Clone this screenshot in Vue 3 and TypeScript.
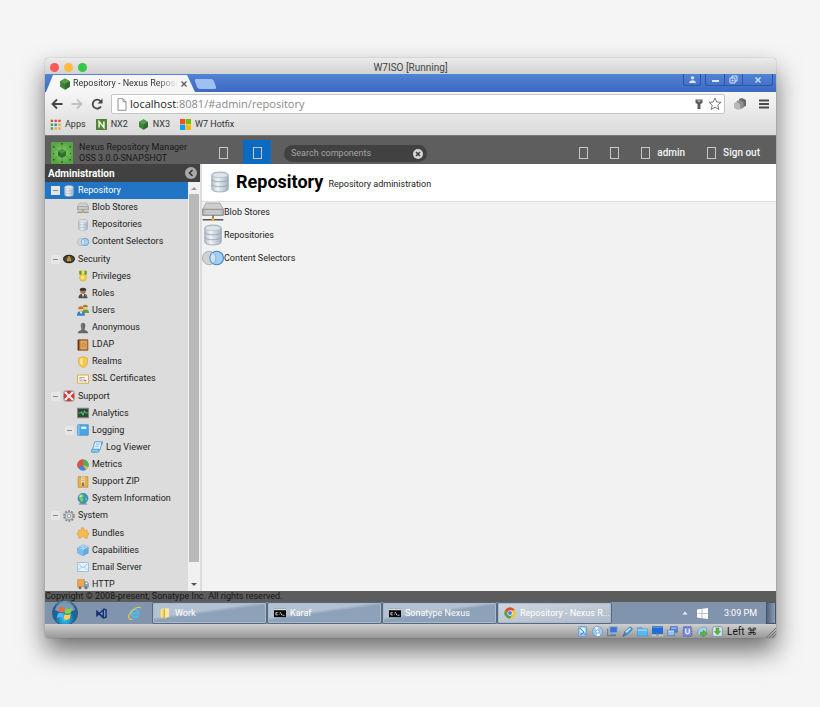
<script setup lang="ts">
import { ref } from 'vue'

interface TreeNode {
  label: string
  icon: string
  depth: number
  parent?: boolean
}

const nodes: TreeNode[] = [
  { label: 'Repository', icon: 'database', depth: 0, parent: true },
  { label: 'Blob Stores', icon: 'drive', depth: 1 },
  { label: 'Repositories', icon: 'database', depth: 1 },
  { label: 'Content Selectors', icon: 'selectors', depth: 1 },
  { label: 'Security', icon: 'security', depth: 0, parent: true },
  { label: 'Privileges', icon: 'medal', depth: 1 },
  { label: 'Roles', icon: 'officer', depth: 1 },
  { label: 'Users', icon: 'users', depth: 1 },
  { label: 'Anonymous', icon: 'anonymous', depth: 1 },
  { label: 'LDAP', icon: 'book', depth: 1 },
  { label: 'Realms', icon: 'shield', depth: 1 },
  { label: 'SSL Certificates', icon: 'certificate', depth: 1 },
  { label: 'Support', icon: 'lifebuoy', depth: 0, parent: true },
  { label: 'Analytics', icon: 'analytics', depth: 1 },
  { label: 'Logging', icon: 'notebook', depth: 1, parent: true },
  { label: 'Log Viewer', icon: 'scroll', depth: 2 },
  { label: 'Metrics', icon: 'pie', depth: 1 },
  { label: 'Support ZIP', icon: 'zip', depth: 1 },
  { label: 'System Information', icon: 'globe', depth: 1 },
  { label: 'System', icon: 'gear', depth: 0, parent: true },
  { label: 'Bundles', icon: 'puzzle', depth: 1 },
  { label: 'Capabilities', icon: 'brick', depth: 1 },
  { label: 'Email Server', icon: 'mail', depth: 1 },
  { label: 'HTTP', icon: 'truck', depth: 1 },
]

const features = [
  { label: 'Blob Stores', icon: 'drive' },
  { label: 'Repositories', icon: 'database' },
  { label: 'Content Selectors', icon: 'selectors' },
]

const bookmarks = [
  { label: 'Apps', icon: 'apps' },
  { label: 'NX2', icon: 'nx2' },
  { label: 'NX3', icon: 'hexagon' },
  { label: 'W7 Hotfix', icon: 'microsoft' },
]

const tasks = [
  { label: 'Work', icon: 'folder' },
  { label: 'Karaf', icon: 'console' },
  { label: 'Sonatype Nexus', icon: 'console' },
  { label: 'Repository - Nexus R...', icon: 'chrome' },
]

const devices = ['harddisk', 'disc', 'network', 'usb', 'shared', 'display', 'windows', 'cpu', 'mouse', 'keyboard']

const selected = ref('Repository')
const active = ref('Repository - Nexus R...')
const address = ref('/#admin/repository')
const query = ref('')
</script>

<template>
  <svg class="sprite" aria-hidden="true">
    <defs>
      <linearGradient id="steel" x1="0" x2="1">
        <stop offset="0" stop-color="#b4c0cb" /><stop offset=".35" stop-color="#eef3f7" /><stop offset="1" stop-color="#a5b3bf" />
      </linearGradient>
      <radialGradient id="orb" cx=".5" cy=".75" r=".75">
        <stop offset="0" stop-color="#39c9f4" /><stop offset=".5" stop-color="#1467a0" /><stop offset=".85" stop-color="#2f5d84" /><stop offset="1" stop-color="#a9c4d6" />
      </radialGradient>
      <radialGradient id="leaf">
        <stop offset="0" stop-color="#8ed068" /><stop offset="1" stop-color="#55a543" />
      </radialGradient>
    </defs>
    <symbol id="database" viewBox="0 0 16 16">
      <path d="M2 3c0-3 12-3 12 0v10c0 3-12 3-12 0z" fill="url(#steel)" stroke="#9aa7b2" stroke-width=".6" />
      <ellipse cx="8" cy="3" rx="5.600" ry="1.800" fill="#dfe7ed" stroke="#a3afb9" stroke-width=".4" />
      <path d="M2 6.200c1 2.200 11 2.200 12 0M2 9.800c1 2.200 11 2.200 12 0" fill="none" stroke="#93a1ad" stroke-width=".6" />
    </symbol>
    <symbol id="drive" viewBox="0 0 16 16">
      <path d="M3 1.500h10l2.500 4.500v4H.5V6z" fill="#cfcfcf" stroke="#9b9b9b" stroke-width=".6" />
      <path d="M.5 6h15v4.500H.5z" fill="#b5b5b5" stroke="#8d8d8d" stroke-width=".6" />
      <path d="M2 7.400h12M2 8.900h12" stroke="#e4e4e4" stroke-width=".6" />
      <path d="M8 10.500V13M.5 13.600h15" stroke="#555" stroke-width="1" />
      <path d="M6.900 12.400h2.200v2.200H6.900z" fill="#eda72f" />
    </symbol>
    <symbol id="selectors" viewBox="0 0 16 16">
      <circle cx="5.200" cy="8" r="4.900" fill="#cfd3d6" stroke="#a5aaaf" stroke-width=".6" />
      <circle cx="10.700" cy="8" r="4.900" fill="#a4cff2" stroke="#3c86ca" stroke-width=".8" />
      <path d="M8 4a4.900 4.900 0 0 1 0 8 4.900 4.900 0 0 1 0-8z" fill="#d0e5f7" stroke="#5c96c8" stroke-width=".4" />
    </symbol>
    <symbol id="security" viewBox="0 0 16 16">
      <ellipse cx="8" cy="8" rx="8" ry="5.600" fill="#292724" />
      <path d="M1 8c3-4 5-4 5-4v8S4 12 1 8zM15 8c-3-4-5-4-5-4v8s2 0 5-4z" fill="#4d473d" />
      <path d="M6.600 4.300h2.800L10.600 11H5.400z" fill="#efc03c" /><path d="M8 4v7" stroke="#6d5213" />
    </symbol>
    <symbol id="medal" viewBox="0 0 16 16">
      <path d="M3 1h10v5l-5 2-5-2z" fill="#5d9d2f" /><path d="M6 1h4v6H6z" fill="#f4df58" />
      <circle cx="8" cy="10.300" r="4.700" fill="#f4cf4d" stroke="#d9a73a" stroke-width=".7" /><circle cx="7.400" cy="9.700" r="2" fill="#fff0a1" />
    </symbol>
    <symbol id="officer" viewBox="0 0 16 16">
      <path d="M2 15c0-5 3-6 6-6s6 1 6 6z" fill="#4e4b47" /><circle cx="8" cy="5.500" r="3.600" fill="#a9764c" />
      <path d="M3.500 4c0-4 9-4 9 0l-1 1h-7z" fill="#38342f" /><path d="M6.500 9.400 8 14l1.500-4.600z" fill="#eee" /><path d="m11 11 2 2" stroke="#dfb438" />
    </symbol>
    <symbol id="users" viewBox="0 0 16 16">
      <path d="M6 12c0-5 2-5 4.500-5S16 7 16 12z" fill="#64a141" /><circle cx="11" cy="4.500" r="3.300" fill="#efc28d" />
      <path d="M7.500 4c0-4 7-4 7 0z" fill="#a9762c" />
      <path d="M0 15.500c0-6 3-6 5.500-6s5 0 5 6z" fill="#3481c8" /><circle cx="5" cy="7" r="3.500" fill="#f3c895" />
      <path d="M1.500 6.500c0-4.500 7-4.500 7 0z" fill="#b8782b" /><path d="m4 10.500 1.500 3 1.500-3z" fill="#fff" />
    </symbol>
    <symbol id="anonymous" viewBox="0 0 16 16">
      <path d="M1 15c0-3 2-3.500 5-4.500L5 5.500c-1-6 7-6 6 0l-1 5c3 1 5 1.500 5 4.500z" fill="#686868" /><path d="M7 2.500c-1 2 0 6 0 7" stroke="#999" fill="none" />
    </symbol>
    <symbol id="book" viewBox="0 0 16 16">
      <path d="M1.500 1h13v14h-13z" fill="#bd7431" stroke="#8a5220" /><path d="M4.500 2.500h8.500v11H4.500z" fill="#e0a860" /><path d="M2 1v14" stroke="#643510" stroke-width="2" />
      <circle cx="8.700" cy="8" r="2.300" fill="none" stroke="#b97a35" />
    </symbol>
    <symbol id="shield" viewBox="0 0 16 16">
      <path d="M8 .7 14 3v5c0 4-3 6.500-6 7.500C5 14.500 2 12 2 8V3z" fill="#f7c84b" stroke="#dda12d" stroke-width=".8" /><path d="M7.500 2.500 4 4v4c0 2 1 3 3.500 4z" fill="#ffe898" />
    </symbol>
    <symbol id="certificate" viewBox="0 0 16 16">
      <path d="M.7 2.700h14.600v11H.7z" fill="#fff5dc" stroke="#dca850" stroke-width="1.300" /><path d="M3 6h7M3 8h4M3 10.500h6" stroke="#8594a0" /><path d="m8 8 5 2-2 2z" fill="#5d8fb7" />
    </symbol>
    <symbol id="lifebuoy" viewBox="0 0 16 16">
      <rect x=".3" y=".3" width="15.400" height="15.400" rx="4" fill="#9aa3a9" /><circle cx="8" cy="8" r="5" fill="none" stroke="#df3732" stroke-width="4.200" />
      <path d="m2.800 2.800 3.200 3.200M13.200 2.800 10 6M2.800 13.200 6 10M13.200 13.200 10 10" stroke="#fff" stroke-width="2.600" /><circle cx="8" cy="8" r="2.800" fill="#e4eaee" />
    </symbol>
    <symbol id="analytics" viewBox="0 0 16 16">
      <path d="M.7 1.700h14.600v12.600H.7z" fill="#2b4938" stroke="#858585" stroke-width="1.400" /><path d="M2 8h3l1-2 2 5 2-6 1.500 3H14" fill="none" stroke="#59df69" stroke-width="1.200" />
    </symbol>
    <symbol id="notebook" viewBox="0 0 16 16">
      <path d="M1 1h14v14H1z" fill="#4aa5e5" stroke="#3b8bcb" /><path d="M2.500 1v14" stroke="#c0e7ff" /><path d="M5.500 3.500h7v3h-7z" fill="#e7f7ff" />
    </symbol>
    <symbol id="scroll" viewBox="0 0 16 16">
      <path d="M5 1h10l-3 11H2z" fill="#e1f4ff" stroke="#3789bd" /><path d="M2 11h9c-1 2 0 4-2 4H1c-2-2 0-4 1-4zM15 1v3h-2" fill="#8dccf1" stroke="#3789bd" /><path d="M6.500 4h5M5.500 7h5" stroke="#65a8d0" />
    </symbol>
    <symbol id="pie" viewBox="0 0 16 16">
      <circle cx="8" cy="8" r="7.500" fill="#3f86d8" /><path d="M8 8V.5A7.500 7.500 0 0 0 1.500 12z" fill="#e24e43" /><path d="M8 8V.5A7.500 7.500 0 0 1 15 10.500z" fill="#58ad48" /><path d="M8 8l7 2.500A7.500 7.500 0 0 1 12 14.300z" fill="#f1bd42" />
    </symbol>
    <symbol id="zip" viewBox="0 0 16 16">
      <path d="M1.500 1h13v14h-13z" fill="#e5b04e" stroke="#bf8c35" /><path d="M6 1h4v11H6z" fill="#fff1c4" /><path d="M8 2v11" stroke="#655035" stroke-dasharray="2 1" /><path d="M6.500 9h3v4h-3z" fill="#807663" />
    </symbol>
    <symbol id="globe" viewBox="0 0 16 16">
      <path d="M3.500 13h9l1.500 2.500H2z" fill="#939c9f" /><circle cx="8" cy="7" r="6.700" fill="#2e91dc" stroke="#27638e" stroke-width=".6" />
      <path d="M4 2c4-1 6 1 5 3L6 6l3 2-2 5-3-4-2-4zM11 5l3 3-2 3z" fill="#7ed149" /><circle cx="5" cy="4" r="1.500" fill="#d7f4ff" opacity=".7" />
    </symbol>
    <symbol id="gear" viewBox="0 0 16 16">
      <circle cx="8" cy="8" r="6.600" fill="none" stroke="#858a8e" stroke-width="2.400" stroke-dasharray="2.600 1.550" /><circle cx="8" cy="8" r="5.300" fill="#d3d5d7" stroke="#858a8e" /><circle cx="8" cy="8" r="2.300" fill="#eee" stroke="#858a8e" />
    </symbol>
    <symbol id="puzzle" viewBox="0 0 16 16">
      <path d="M6 4.500C4-.5 10.500-.5 9 4.500l4.500-.5v3.500c3.500-1 3.500 4.500 0 3.500L14 15l-4-.5c-.5-3-3.500-3-4 0l-4 .5.500-4c-3.500.5-3.500-4.500 0-3.500L2 4z" fill="#f6ba4e" stroke="#dd9a38" stroke-width=".8" />
    </symbol>
    <symbol id="brick" viewBox="0 0 16 16">
      <path d="m1 5 7-4 7 3v8l-7 3.500L1 12z" fill="#64aee6" stroke="#4486bb" stroke-width=".6" /><path d="m1 5 7 3 7-4-7-3z" fill="#afdcfb" /><path d="M8 8v7.500L1 12V5z" fill="#7dbcf0" />
      <ellipse cx="5" cy="4.500" rx="2" ry="1" fill="#80baf0" /><ellipse cx="10" cy="4" rx="2" ry="1" fill="#80baf0" />
    </symbol>
    <symbol id="mail" viewBox="0 0 16 16">
      <path d="M.7 2h14.600v12H.7z" fill="#e3f4ff" stroke="#8bbbd8" stroke-width="1.100" /><path d="m2 4 6 5 6-5M2 12l4-4M14 12l-4-4" fill="none" stroke="#8ab8d6" />
    </symbol>
    <symbol id="truck" viewBox="0 0 16 16">
      <path d="M.5 2h9.500v10H.5z" fill="#eba452" stroke="#c8893f" stroke-width=".7" /><path d="M10 5h3.500l2 3v4H10z" fill="#84a6bf" stroke="#65859d" stroke-width=".7" /><path d="M11.500 6h1.600l1.300 2h-2.900z" fill="#e3f6ff" />
      <circle cx="4" cy="13" r="2" fill="#6d7275" /><circle cx="12" cy="13" r="2" fill="#6d7275" />
    </symbol>
    <symbol id="hexagon" viewBox="0 0 16 16">
      <path d="m8 .5 6.500 3.700v7.600L8 15.500l-6.500-3.700V4.200z" fill="#3e853a" /><path d="m8 .5 6.500 3.700L8 8 1.500 4.200z" fill="#579b4b" /><path d="m14.500 4.200-6.500 3.800v7.500l6.500-3.700z" fill="#2f6d2f" />
    </symbol>
    <symbol id="apps" viewBox="0 0 16 16">
      <path d="M1 1h3.500v3.500H1zM6.500 1H10v3.500H6.500zM12 1h3.500v3.500H12z" fill="#d94d3d" /><path d="M1 6.500h3.500V10H1z" fill="#45a45a" /><path d="M6.500 6.500H10V10H6.500z" fill="#3a7bd6" /><path d="M12 6.500h3.500V10H12zM6.500 12H10v3.500H6.500zM12 12h3.500v3.500H12z" fill="#e3ae36" /><path d="M1 12h3.500v3.500H1z" fill="#45a45a" />
    </symbol>
    <symbol id="nx2" viewBox="0 0 16 16">
      <path d="M.5.500h15v15H.5z" fill="#55892d" stroke="#37671d" /><path d="M4.500 12.500v-9l7 9v-9" fill="none" stroke="#fff" stroke-width="2" />
    </symbol>
    <symbol id="microsoft" viewBox="0 0 16 16">
      <path d="M0 0h7.600v7.600H0z" fill="#f25022" /><path d="M8.400 0H16v7.600H8.400z" fill="#7fba00" /><path d="M0 8.400h7.600V16H0z" fill="#00a4ef" /><path d="M8.400 8.400H16V16H8.400z" fill="#ffb900" />
    </symbol>
    <symbol id="folder" viewBox="0 0 16 16">
      <path d="M2 2.500 7 1v14l-5-1z" fill="#f5df87" /><path d="M6 3h4v12H6z" fill="#d9af41" /><path d="M8 1.500h5.500v11L8 15z" fill="#fae9a4" />
    </symbol>
    <symbol id="console" viewBox="0 0 16 16">
      <path d="M0 2.500h16v11H0z" fill="#090909" /><path d="M0 2.500h16v1.800H0z" fill="#d7dade" /><path d="M5 7.500H2.500v3H5M7 7.500v.8M7 10v.8M8.500 7l2 4M11.500 11H14" fill="none" stroke="#fff" />
    </symbol>
    <symbol id="chrome" viewBox="0 0 16 16">
      <circle cx="8" cy="8" r="7.500" fill="#f4c431" /><path d="M1.500 4.200A7.500 7.500 0 0 1 14.500 4.300H8L5 10z" fill="#de4c3c" /><path d="M1.500 4.200A7.500 7.500 0 0 0 8 15.500L11 10H5z" fill="#4ba355" /><circle cx="8" cy="8" r="3.500" fill="#fff" /><circle cx="8" cy="8" r="2.700" fill="#4a83df" />
    </symbol>
    <symbol id="harddisk" viewBox="0 0 16 16">
      <rect x="2" y=".7" width="12" height="14.600" rx="1.500" fill="#9cc8ec" stroke="#5b93c9" /><circle cx="8" cy="6" r="4" fill="#e4f5ff" /><path d="m4 3 6 6-5 4M11 12h2" fill="none" stroke="#1960c5" stroke-width="1.400" />
    </symbol>
    <symbol id="disc" viewBox="0 0 16 16">
      <circle cx="8" cy="8" r="7.300" fill="#a2cdef" stroke="#5790c5" /><path d="M8 8 4 2l5-1zM8 8l4 6-5 1z" fill="#f4fcff" /><circle cx="8" cy="8" r="2.400" fill="#f8ffff" stroke="#5591c2" />
    </symbol>
    <symbol id="network" viewBox="0 0 16 16">
      <path d="M4 1h11v9H4z" fill="#3775d8" stroke="#9db6d0" stroke-width="1.400" /><path d="M1 4v10h11v-2" fill="none" stroke="#567ba3" stroke-width="1.500" /><path d="M7 10v3h5" stroke="#5b7796" fill="none" />
    </symbol>
    <symbol id="usb" viewBox="0 0 16 16">
      <path d="m2 15 2-7 7-6c3-1 5 2 3 4l-6 6z" fill="#53a3e1" stroke="#2870ad" /><path d="m5 8 6-5 2 1-7 6z" fill="#c6eaff" /><path d="m1 15 5-5" stroke="#596c7b" stroke-width="1.500" />
    </symbol>
    <symbol id="shared" viewBox="0 0 16 16">
      <path d="M.5 2.500H7l1 2h7.500v10H.5z" fill="#5db6ee" stroke="#3c94d1" /><path d="M1 6h14" stroke="#bde6ff" stroke-width="1.500" />
    </symbol>
    <symbol id="display" viewBox="0 0 16 16">
      <path d="M.7 1h14.600v10H.7z" fill="#1e6be2" stroke="#145fae" /><path d="M1 2h14" stroke="#76aaf4" /><path d="M0 12.500h16V15H0z" fill="#b8c5cd" /><path d="M6 11h4v3H6z" fill="#89969d" />
    </symbol>
    <symbol id="windows" viewBox="0 0 16 16">
      <path d="M5 1h10v8H5z" fill="#5488da" stroke="#315fb8" /><path d="M1 6h10v8H1z" fill="#98bdf1" stroke="#4976bd" /><path d="M2 7.500h8M6 3h8" stroke="#e7f4ff" />
    </symbol>
    <symbol id="cpu" viewBox="0 0 16 16">
      <rect x="2" y="1" width="12" height="14" rx="2" fill="#7f90dc" stroke="#5465ba" stroke-dasharray="1.500 1" stroke-width="2" /><path d="M5.500 4v5c0 3 5 3 5 0V4" fill="none" stroke="#fff" stroke-width="1.600" />
    </symbol>
    <symbol id="mouse" viewBox="0 0 16 16">
      <path d="M1 11C1 4 8 0 13 2c4 5-4 12-9 12z" fill="#a4d5f4" stroke="#4482ac" stroke-width=".8" /><path d="m9 6 6 5-6 5v-3H5V9h4z" fill="#56bc36" stroke="#2c8428" stroke-width=".7" />
    </symbol>
    <symbol id="keyboard" viewBox="0 0 16 16">
      <rect x="1" y="1" width="14" height="14" rx="2" fill="#d5e5ec" stroke="#67889f" /><path d="M8 13 3.500 8H6V3h4v5h2.500z" fill="#5db73a" stroke="#37872a" stroke-width=".7" />
    </symbol>
    <symbol id="flag" viewBox="0 0 16 16">
      <path d="M2 3c2-1.500 4-1.500 6-.3L7 7.500c-2-1.300-4-1.300-6 0z" fill="#f06b34" /><path d="M8.800 3.200c2 1.300 4.200 1 6.200-.2l-1 4.700c-2 1.500-4.500 1.500-6.200.3z" fill="#92cb41" /><path d="M.8 8.700c2-1.500 4-1.300 6 0l-1 4.600c-2-1.300-4-1.300-6 0z" fill="#5ab4ed" /><path d="M7.600 9.200c2 1.300 4.300 1 6.200-.3l-1 4.600c-2 1.500-4.500 1.500-6.200.3z" fill="#fdd341" />
    </symbol>
    <symbol id="person" viewBox="0 0 16 16">
      <circle cx="8" cy="5" r="3" /><path d="M2 14c0-6 12-6 12 0z" />
    </symbol>
    <symbol id="close" viewBox="0 0 16 16"><path d="m3 3 10 10M13 3 3 13" fill="none" stroke="currentColor" stroke-width="2.500" /></symbol>
  </svg>

  <div class="desktop">
    <div class="window">
      <header class="titlebar">
        <div class="lights">
          <button class="light red" aria-label="Close window"></button>
          <button class="light amber" aria-label="Minimise window"></button>
          <button class="light green" aria-label="Zoom window"></button>
        </div>
        <span>W7ISO [Running]</span>
      </header>

      <div class="tabstrip">
        <div class="tab">
          <svg class="i12"><use href="#hexagon" /></svg>
          <span class="tab-title">Repository - Nexus Reposi</span>
          <button class="tab-close" aria-label="Close tab"><svg class="i8"><use href="#close" /></svg></button>
        </div>
        <button class="new-tab" aria-label="New tab"></button>
        <div class="controls">
          <button class="profile" aria-label="Profile"><svg class="i9"><use href="#person" /></svg></button>
          <div class="control-group">
            <button aria-label="Minimise"><svg class="i9" viewBox="0 0 9 9"><path d="M1 5h7v2H1z" /></svg></button>
            <button aria-label="Restore"><svg class="i9" viewBox="0 0 9 9"><path d="M3 3V1h5v5H6M1 3h5v5H1zM3 5h1v1H3z" fill="none" stroke="#dbe7fa" /></svg></button>
            <button class="wide" aria-label="Close"><svg class="i8"><use href="#close" /></svg></button>
          </div>
        </div>
      </div>

      <div class="toolbar">
        <button class="tool" aria-label="Back"><svg class="i12" viewBox="0 0 12 12"><path d="M6 1.500 1.500 6 6 10.500M2 6h9.500" fill="none" stroke="#454545" stroke-width="1.800" /></svg></button>
        <button class="tool" aria-label="Forward"><svg class="i12" viewBox="0 0 12 12"><path d="M6 1.500 10.500 6 6 10.500M10 6H.5" fill="none" stroke="#c2c2c2" stroke-width="1.800" /></svg></button>
        <button class="tool" aria-label="Reload"><svg class="i12" viewBox="0 0 12 12"><path d="M10 8.500A4.500 4.500 0 1 1 9.500 3" fill="none" stroke="#454545" stroke-width="1.800" /><path d="M11.500.500v5h-5z" fill="#454545" /></svg></button>
        <div class="address">
          <svg class="page-icon" viewBox="0 0 10 13"><path d="M1 .7h5l3 3v8.600H1zM6 .7v3h3" fill="#fff" stroke="#8f8f8f" /></svg>
          <label class="url" aria-label="Address"><span>localhost</span><span class="path">:8081</span><input v-model="address" class="path" aria-label="Address path" /></label>
          <button aria-label="Saved passwords"><svg class="i12" viewBox="0 0 12 12"><path d="M2.500 1.500h7v3.500L7.500 6v5h-3V6l-2-1z" fill="#5c5c5c" /><path d="M4.500 3h3" stroke="#ddd" /></svg></button>
          <button aria-label="Bookmark this page"><svg class="star" viewBox="0 0 14 14"><path d="m7 1 1.700 4 4.300.3-3.300 2.800 1.100 4.400L7 10.100l-3.800 2.400 1.100-4.400L1 5.300 5.300 5z" fill="#fff" stroke="#777" /></svg></button>
        </div>
        <button class="tool" aria-label="Extension"><svg class="i12" viewBox="0 0 12 12"><path d="m5 1 3-1 4 2v6L9 9 5 7z" fill="#696969" /><path d="m2.500 3 3-1 4 2v6l-3 1-4-2z" fill="#909090" /><path d="m0 5 2.500-1L6 6v5l-2 1-4-2z" fill="#b9b9b9" /></svg></button>
        <button class="tool menu" aria-label="Menu"><svg class="i10" viewBox="0 0 10 10"><path d="M0 1.500h10M0 5h10M0 8.500h10" stroke="#4b4b4b" stroke-width="2" /></svg></button>
      </div>

      <nav class="bookmarks" aria-label="Bookmarks">
        <a v-for="b in bookmarks" :key="b.label" href="#"><svg class="i11"><use :href="'#' + b.icon" /></svg>{{ b.label }}</a>
      </nav>

      <div class="app-header">
        <svg class="logo" viewBox="0 0 22 22">
          <path d="M0 0h22v22H0z" fill="url(#leaf)" /><path d="m11 7 4 2.200v4.600L11 16l-4-2.200V9.200z" fill="#2f7032" /><path d="m11 7 4 2.200-4 2.300-4-2.300z" fill="#499540" />
          <path d="m7 9-4-4m12 4 4-4M7 14l-4 4m12-4 4 4M11 7V2m0 14v5" stroke="#478a40" stroke-width=".5" />
          <path d="M2 4h1.500v1.500H2zM18.500 4H20v1.500h-1.500zM2 17h1.500v1.500H2zM18.500 17H20v1.500h-1.500zM10.300 1h1.500v1.500h-1.500zM10.300 19h1.500v1.500h-1.500zM2 11h1v1H2zM19 11h1v1h-1z" fill="#285a28" />
        </svg>
        <div class="brand">Nexus Repository Manager<br />OSS 3.0.0-SNAPSHOT</div>
        <button class="mode" aria-label="Browse"><i class="box"></i></button>
        <button class="mode on" aria-label="Administration"><i class="box"></i></button>
        <div class="search">
          <input v-model="query" type="text" placeholder="Search components" aria-label="Search components" />
          <button aria-label="Clear search" @click="query = ''"><svg class="i10" viewBox="0 0 10 10"><circle cx="5" cy="5" r="5" fill="#d8d8d8" /><path d="m3 3 4 4M7 3 3 7" stroke="#3e3e3e" stroke-width="1.500" /></svg></button>
        </div>
        <div class="session">
          <button aria-label="Refresh"><i class="box"></i></button>
          <button aria-label="Help"><i class="box"></i></button>
          <button><i class="box"></i>admin</button>
          <button><i class="box"></i>Sign out</button>
        </div>
      </div>

      <div class="body">
        <aside class="sidebar">
          <div class="side-title">
            Administration
            <button aria-label="Collapse"><svg class="i12" viewBox="0 0 12 12"><circle cx="6" cy="6" r="6" fill="#aaa" /><path d="M7.500 3 4.500 6l3 3" fill="none" stroke="#333" stroke-width="1.600" /></svg></button>
          </div>
          <div class="tree-area">
            <ul class="tree">
              <li v-for="n in nodes" :key="n.label" :class="['depth-' + n.depth, { selected: selected === n.label }]">
                <button class="node" @click="selected = n.label">
                  <span class="toggle" :class="{ shown: n.parent }"></span>
                  <svg class="i12"><use :href="'#' + n.icon" /></svg>
                  <span>{{ n.label }}</span>
                </button>
              </li>
            </ul>
            <div class="scrollbar" aria-hidden="true">
              <svg class="arrow" viewBox="0 0 12 12"><path d="m3 8 3-3 3 3z" fill="#999" /></svg>
              <div class="thumb"></div>
              <svg class="arrow tall" viewBox="0 0 12 12"><path d="m3 5 3 3 3-3z" fill="#555" /></svg>
            </div>
          </div>
        </aside>

        <main class="content">
          <div class="content-head">
            <svg class="i22"><use href="#database" /></svg>
            <h1>Repository</h1>
            <span>Repository administration</span>
          </div>
          <ul class="features">
            <li v-for="f in features" :key="f.label">
              <a href="#"><svg class="i22"><use :href="'#' + f.icon" /></svg>{{ f.label }}</a>
            </li>
          </ul>
        </main>
      </div>

      <footer class="copyright">Copyright © 2008-present, Sonatype Inc. All rights reserved.</footer>

      <div class="taskbar">
        <button class="start" aria-label="Start">
          <svg viewBox="0 0 26 26"><circle cx="13" cy="13" r="12.500" fill="url(#orb)" stroke="#35597a" /><path d="M3 10C5 0 21 0 23 10c-7 3-14 3-20 0z" fill="#d5e8f2" opacity=".45" /><use href="#flag" x="5" y="5" width="16" height="16" /></svg>
        </button>
        <button class="pinned" aria-label="Visual Studio"><svg class="i11" viewBox="0 0 12 12"><path d="M1 3.500v5l7-6.500v8z M8 1l3 1v8l-3 1-7-7" fill="none" stroke="#123173" stroke-width="1.500" /></svg></button>
        <button class="pinned" aria-label="Internet Explorer"><svg class="i14" viewBox="0 0 14 14"><path d="M3.500 7.500h7c0-5-7-5-7 0 0 4 5 5 7 2" fill="none" stroke="#4fb9ed" stroke-width="2.200" /><path d="M13 2C9-1-2 8 1.500 13c1 1 3 0 3 0" fill="none" stroke="#e7c64b" stroke-width="1.200" /></svg></button>
        <div class="tasks">
          <button v-for="t in tasks" :key="t.label" class="task" :class="{ active: active === t.label }" @click="active = t.label">
            <svg class="i12"><use :href="'#' + t.icon" /></svg><span>{{ t.label }}</span>
          </button>
        </div>
        <div class="tray">
          <svg class="i8" viewBox="0 0 8 8"><path d="m1.500 5.500 2.500-3 2.500 3z" fill="#eef2f8" /></svg>
          <svg class="i11" viewBox="0 0 11 11"><path d="m0 1.500 4.700-.7v4.400H0zM5.300.7 11 0v5.200H5.300zM0 5.800h4.700v4.400L0 9.500zM5.300 5.800H11V11l-5.700-.7z" fill="#fff" /></svg>
          <time>3:09 PM</time>
        </div>
        <button class="peek" aria-label="Show desktop"></button>
      </div>

      <div class="statusbar">
        <svg v-for="d in devices" :key="d" class="i11"><use :href="'#' + d" /></svg>
        <span class="hostkey">Left ⌘</span>
        <svg class="grip" viewBox="0 0 10 10"><path d="M0 10 10 0M3 10l7-7M6 10l4-4" stroke="#6f6f6f" /></svg>
      </div>
    </div>
  </div>
</template>

<style>
body {
  background: #f5f5f5;
}
</style>

<style scoped>
* {
  box-sizing: border-box;
}
button {
  padding: 0;
  border: 0;
  background: none;
  font: inherit;
  color: inherit;
}
button,
a,
.lights,
.tab,
.tray {
  display: flex;
  align-items: center;
}
button {
  justify-content: center;
}
a {
  color: inherit;
  text-decoration: none;
}
ul {
  margin: 0;
  padding: 0;
  list-style: none;
}
svg {
  display: block;
  flex: none;
}
.sprite {
  position: absolute;
  width: 0;
  height: 0;
}
.i8 { width: 8px; height: 8px; }
.i9 { width: 9px; height: 9px; }
.i10 { width: 10px; height: 10px; }
.i11 { width: 11px; height: 11px; }
.i12 { width: 12px; height: 12px; }
.i14 { width: 14px; height: 14px; }
.i22 { width: 22px; height: 22px; }

.desktop {
  display: flex;
  min-height: 100vh;
  padding: 58px 44px 69px 45px;
  font-family: Roboto, 'Liberation Sans', sans-serif;
  font-size: 9px;
  line-height: 11px;
  color: #222;
}
.window {
  flex: 1;
  min-width: 0;
  display: flex;
  flex-direction: column;
  border-radius: 4px;
  overflow: hidden;
  background: #dcdcdc;
  box-shadow: 0 0 1px rgba(0, 0, 0, 0.5), 0 13px 26px rgba(0, 0, 0, 0.55);
}

.titlebar {
  display: grid;
  grid-template-columns: 1fr auto 1fr;
  align-items: center;
  height: 16px;
  padding: 2px 5px 0;
  background: linear-gradient(#ebebeb, #d2d2d2);
  color: #444;
  font-size: 10px;
}
.lights {
  gap: 5px;
}
.light {
  width: 9px;
  height: 9px;
  border-radius: 50%;
}
.red { background: #fc5b57; }
.amber { background: #fdbc40; }
.green { background: #34c84a; }

.tabstrip {
  display: flex;
  height: 18px;
  background: linear-gradient(#5283d4, #3c69c4);
}
.tab {
  width: 149px;
  margin: 1px 0 0 1px;
  padding: 0 10px 0 13px;
  background: #f6f6f6;
  clip-path: polygon(0 100%, 7px 0, 141px 0, 100% 100%);
  gap: 2px;
  color: #333;
}
.tab-title {
  flex: 1;
  white-space: nowrap;
  mask-image: linear-gradient(90deg, #000 80%, transparent);
}
.tab-close {
  color: #555;
}
.new-tab {
  width: 19px;
  height: 10px;
  margin: 5px 0 0 1px;
  border-radius: 2px;
  background: #9fc0f1;
  transform: skewX(20deg);
}
.controls {
  display: flex;
  gap: 4px;
  margin: 0 3px 0 auto;
  height: 12px;
  color: #dbe7fa;
  fill: #dbe7fa;
}
.profile,
.control-group {
  border: 1px solid #2c57a8;
  border-top: 0;
  border-radius: 0 0 3px 3px;
}
.profile {
  width: 18px;
}
.control-group {
  display: flex;
}
.control-group button {
  width: 18px;
}
.control-group button + button {
  border-left: 1px solid #2c57a8;
}
.control-group .wide {
  width: 30px;
}

.toolbar {
  display: flex;
  align-items: center;
  height: 24px;
  padding: 0 6px;
  gap: 8px;
  background: linear-gradient(#f6f6f6, #e6e6e6);
}
.tool {
  width: 12px;
  height: 20px;
}
.menu {
  margin-left: 4px;
}
.address {
  flex: 1;
  display: flex;
  align-items: center;
  height: 20px;
  margin-right: 1px;
  padding: 0 2px 0 5px;
  gap: 3px;
  background: #fff;
  border: 1px solid #c4c4c4;
  border-radius: 2px;
}
.page-icon {
  width: 10px;
  height: 13px;
}
.url {
  flex: 1;
  display: flex;
  align-items: center;
  font: 11px/16px 'Open Sans', sans-serif;
  color: #222;
}
.path {
  color: #888;
}
.url input {
  flex: 1;
  min-width: 0;
  padding: 0;
  border: 0;
  outline: 0;
  background: none;
  font: inherit;
}
.star {
  width: 14px;
  height: 14px;
}

.bookmarks {
  display: flex;
  gap: 10px;
  height: 19px;
  padding: 0 5px 2px;
  background: linear-gradient(#e6e6e6, #dadada);
  color: #333;
}
.bookmarks a {
  gap: 4px;
}

.app-header {
  display: flex;
  align-items: flex-end;
  height: 29px;
  padding: 0 16px 0 6px;
  background: #5e5e5e;
  border-top: 1px solid #777;
}
.logo {
  width: 22px;
  height: 22px;
}
.brand {
  width: 130px;
  margin-left: 6px;
  color: #181818;
  white-space: nowrap;
}
.box {
  width: 9px;
  height: 12px;
  border: 1px solid #c8c8c8;
}
.mode {
  width: 28px;
  height: 24px;
  padding-top: 2px;
}
.mode:nth-of-type(1) {
  margin-right: 6px;
}
.on {
  background: #0a6bc0;
}
.search {
  display: flex;
  align-items: center;
  width: 143px;
  height: 17px;
  margin: 0 0 2px 13px;
  padding: 0 4px 0 7px;
  border-radius: 9px;
  background: #414141;
}
.search input {
  flex: 1;
  min-width: 0;
  padding: 0;
  border: 0;
  outline: 0;
  background: none;
  font: inherit;
  color: #eee;
}
.search input::placeholder {
  color: #a5a5a5;
  opacity: 1;
}
.session {
  display: flex;
  align-items: center;
  height: 24px;
  padding-top: 1px;
  margin-left: auto;
  gap: 22px;
  color: #f4f4f4;
  font-size: 10px;
  font-weight: 500;
}
.session button {
  gap: 7px;
}

.body {
  flex: 1;
  min-height: 0;
  display: flex;
}
.sidebar {
  flex: none;
  display: flex;
  flex-direction: column;
  width: 157px;
  border-right: 2px solid #dcdcdc;
  background: #dcdcdc;
}
.side-title {
  display: flex;
  align-items: center;
  justify-content: space-between;
  height: 18px;
  padding: 0 3px;
  background: #414141;
  color: #fff;
  font-size: 10px;
  font-weight: 700;
}
.tree-area {
  flex: 1;
  min-height: 0;
  display: flex;
  overflow: hidden;
}
.tree {
  flex: 1;
  display: flex;
  flex-direction: column;
  margin-bottom: -2px;
}
.tree li {
  flex: 1;
  display: flex;
  padding-left: 6px;
}
.tree .depth-1 { padding-left: 20px; }
.tree .depth-2 { padding-left: 34px; }
.tree .selected {
  background: #2175c4;
  color: #fff;
}
.node {
  flex: 1;
  justify-content: flex-start;
  gap: 3px;
  white-space: nowrap;
}
.toggle {
  width: 9px;
  height: 9px;
}
.shown {
  display: flex;
  align-items: center;
  justify-content: center;
  background: #e6e6e6;
}
.shown::before {
  content: '';
  width: 5px;
  height: 1px;
  background: #888;
}
.scrollbar {
  display: flex;
  flex-direction: column;
  width: 12px;
  background: #f1f1f1;
}
.arrow {
  width: 12px;
  height: 12px;
}
.tall {
  height: 14px;
  margin-top: 15px;
}
.thumb {
  flex: 1;
  margin: 0 1px;
  background: #b9b9b9;
}

.content {
  flex: 1;
  min-width: 0;
  background: #f2f2f2;
}
.content-head {
  display: flex;
  align-items: center;
  height: 38px;
  padding: 0 7px 2px;
  background: #fff;
  border-bottom: 1px solid #dcdcdc;
}
h1 {
  margin: 0 5px;
  font-size: 18px;
  line-height: 20px;
  font-weight: 700;
  color: #000;
}
.content-head span {
  padding-top: 6px;
}
.features li {
  height: 23px;
}
.features a {
  height: 20px;
}

.copyright {
  height: 11px;
  background: #5c5c5c;
  color: #151515;
}
.taskbar {
  display: flex;
  height: 22px;
  background: #8194ad;
  color: #fff;
}
.start {
  width: 39px;
}
.start svg {
  width: 26px;
  height: 26px;
  margin: -2px 0;
}
.pinned {
  width: 34px;
}
.tasks {
  flex: 1;
  display: flex;
  max-width: 460px;
}
.task {
  flex: 1;
  justify-content: flex-start;
  gap: 4px;
  padding-left: 6px;
  white-space: nowrap;
  border: 1px solid #596a80;
  border-radius: 2px;
  box-shadow: inset 0 0 0 1px #a9b8ca;
  background: linear-gradient(172deg, #b4c1d0 40%, #8da1b8 50%);
}
.task.active {
  background: linear-gradient(172deg, #cfd6df, #aebbc9);
}
.tray {
  margin-left: auto;
  gap: 8px;
}
.tray time {
  margin: 0 9px 0 8px;
}
.peek {
  width: 10px;
  border: 1px solid #45566d;
  background: linear-gradient(90deg, #52657e, #8d9db2);
}

.statusbar {
  display: flex;
  align-items: center;
  justify-content: flex-end;
  gap: 4px;
  height: 14px;
  background: linear-gradient(#cfcfcf, #989898);
  color: #111;
}
.hostkey {
  font-size: 10px;
  margin-right: 5px;
}
.grip {
  width: 10px;
  height: 10px;
  align-self: flex-end;
}
</style>
